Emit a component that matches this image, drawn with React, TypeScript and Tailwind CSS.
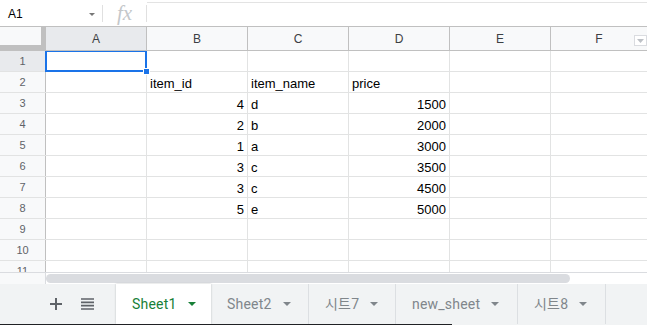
import React from 'react';

const cols = ['A', 'B', 'C', 'D', 'E', 'F'];

const data: Record<number, (string | number)[]> = {
    2: ['', 'item_id', 'item_name', 'price'],
    3: ['', 4, 'd', 1500],
    4: ['', 2, 'b', 2000],
    5: ['', 1, 'a', 3000],
    6: ['', 3, 'c', 3500],
    7: ['', 3, 'c', 4500],
    8: ['', 5, 'e', 5000],
};

const tabs = [
    { name: 'Sheet1', w: 'w-[95px]', active: true },
    { name: 'Sheet2', w: 'w-[98px]' },
    { name: '시트7', w: 'w-[87px]' },
    { name: 'new_sheet', w: 'w-[122px]' },
    { name: '시트8', w: 'w-[88px]' },
];

const Caret = ({ color }: { color: string }) => (
    <svg width="8" height="4" viewBox="0 0 8 4">
        <path d="M0 0 L8 0 L4 4 Z" fill={color} />
    </svg>
);

const FormulaBar = () => (
    <div className="flex h-[26px] items-center bg-white">
        <div className="flex w-[102px] items-center justify-between pl-2 pr-[7px] pt-[2px] text-[12px] text-black">
            <span>A1</span>
            <svg width="6" height="3" viewBox="0 0 6 3">
                <path d="M0 0 L6 0 L3 3 Z" fill="#777" />
            </svg>
        </div>
        <div className="h-[17px] w-px bg-[#e0e0e0]" />
        <div className="flex w-[43px] items-center justify-center font-['Liberation_Serif'] text-[21px] italic leading-none text-[#c4c7ca]">
            fx
        </div>
        <div className="h-[17px] w-px bg-[#e0e0e0]" />
        <div className="h-full flex-1 border-t-[1px] border-[#e3e3e3] mt-[3px]" />
    </div>
);

const HeaderRow = () => (
    <div className="flex h-[25px] border-y border-y-[#c0c0c0] bg-[#f8f9fa]">
        <div className="relative w-[46px] border-r border-[#c0c0c0] bg-[#c0c0c0]">
            <div className="h-[18px] w-[41px] bg-[#f8f9fa]" />
        </div>
        {cols.map((c, i) => (
            <div
                key={c}
                className={`relative flex items-center justify-center text-[12px] text-[#3c4043] ${
                    i === 5 ? 'flex-1' : 'w-[101px] border-r border-[#c0c0c0]'
                } ${i === 0 ? 'bg-[#e8eaed]' : ''}`}
            >
                {c}
                {i === 5 && (
                    <div className="absolute right-0 top-[8px] flex h-[11px] w-[13px] items-center justify-center border border-[#dadce0] bg-white">
                        <svg width="7" height="4" viewBox="0 0 7 4">
                            <path d="M0 0 L7 0 L3.5 4 Z" fill="#bdc1c6" />
                        </svg>
                    </div>
                )}
            </div>
        ))}
    </div>
);

const GridRow = ({ n }: { n: number }) => {
    const vals = data[n] || [];
    return (
        <div className="flex h-[21px] border-b border-[#e2e3e3]">
            <div
                className={`flex w-[46px] items-center justify-center border-r border-r-[#c0c0c0] text-[11px] text-[#5f6368] ${
                    n === 1 ? 'bg-[#e8eaed]' : 'bg-[#f8f9fa]'
                }`}
            >
                {n}
            </div>
            {cols.map((c, i) => {
                const v = vals[i];
                const isNum = typeof v === 'number';
                return (
                    <div
                        key={c}
                        className={`relative flex items-end px-[3px] pb-[1px] text-[13px] leading-[15px] text-black ${
                            isNum ? 'justify-end' : 'justify-start'
                        } ${i === 5 ? 'flex-1' : 'w-[101px] border-r border-[#e2e3e3]'}`}
                    >
                        {v}
                        {n === 1 && i === 0 && (
                            <>
                                <div className="absolute -left-px -top-px z-10 h-[22px] w-[102px] border-2 border-[#1a73e8]" />
                                <div className="absolute -bottom-[4px] -right-[4px] z-20 h-[7px] w-[7px] border border-white bg-[#1a73e8]" />
                            </>
                        )}
                    </div>
                );
            })}
        </div>
    );
};

const PlusIcon = () => (
    <svg width="12" height="12" viewBox="0 0 12 12">
        <path d="M6 0 V12 M0 6 H12" stroke="#5f6368" strokeWidth="2" />
    </svg>
);

const ListIcon = () => (
    <svg width="13" height="12" viewBox="0 0 13 12">
        <path d="M0 1 H13 M0 4.33 H13 M0 7.67 H13 M0 11 H13" stroke="#5f6368" strokeWidth="1.6" />
    </svg>
);

const TabBar = () => (
    <div className="flex h-[41px] flex-col bg-[#f1f3f4]">
        <div className="flex h-[40px]">
            <div className="flex w-[116px] items-center">
                <div className="ml-[50px] flex items-center">
                    <PlusIcon />
                </div>
                <div className="ml-[19px] flex items-center">
                    <ListIcon />
                </div>
            </div>
            {tabs.map((t) => (
                <div
                    key={t.name}
                    className={`flex h-full items-center gap-[11px] pl-4 text-[14px] tracking-[0.2px] ${t.w} ${
                        t.active
                            ? 'bg-white text-[#188038] shadow-[0_0_2px_rgba(60,64,67,0.3)]'
                            : 'border-r border-[#dcdfe2] text-[#80868b]'
                    }`}
                >
                    <span>{t.name}</span>
                    <Caret color={t.active ? '#188038' : '#80868b'} />
                </div>
            ))}
        </div>
        <div className="h-px w-[452px] bg-[#202124]" />
    </div>
);

const App = () => {
    return (
        <div className="h-[325px] w-[647px] overflow-hidden bg-white font-['Liberation_Sans',Arial,sans-serif]">
            <FormulaBar />
            <HeaderRow />
            <div className="h-[221px] overflow-hidden">
                {Array.from({ length: 11 }, (_, i) => (
                    <GridRow key={i} n={i + 1} />
                ))}
            </div>
            <div className="flex h-[12px] border-t border-[#dadce0] bg-white">
                <div className="w-[46px] border-r border-[#dadce0] bg-[#f8f9fa]" />
                <div className="flex flex-1 items-start pt-[1px]">
                    <div className="h-[9px] w-[524px] rounded-full bg-[#dadce0]" />
                </div>
            </div>
            <div className="font-['Roboto','Noto_Sans_CJK_KR',sans-serif]">
                <TabBar />
            </div>
        </div>
    );
};

export default App;
